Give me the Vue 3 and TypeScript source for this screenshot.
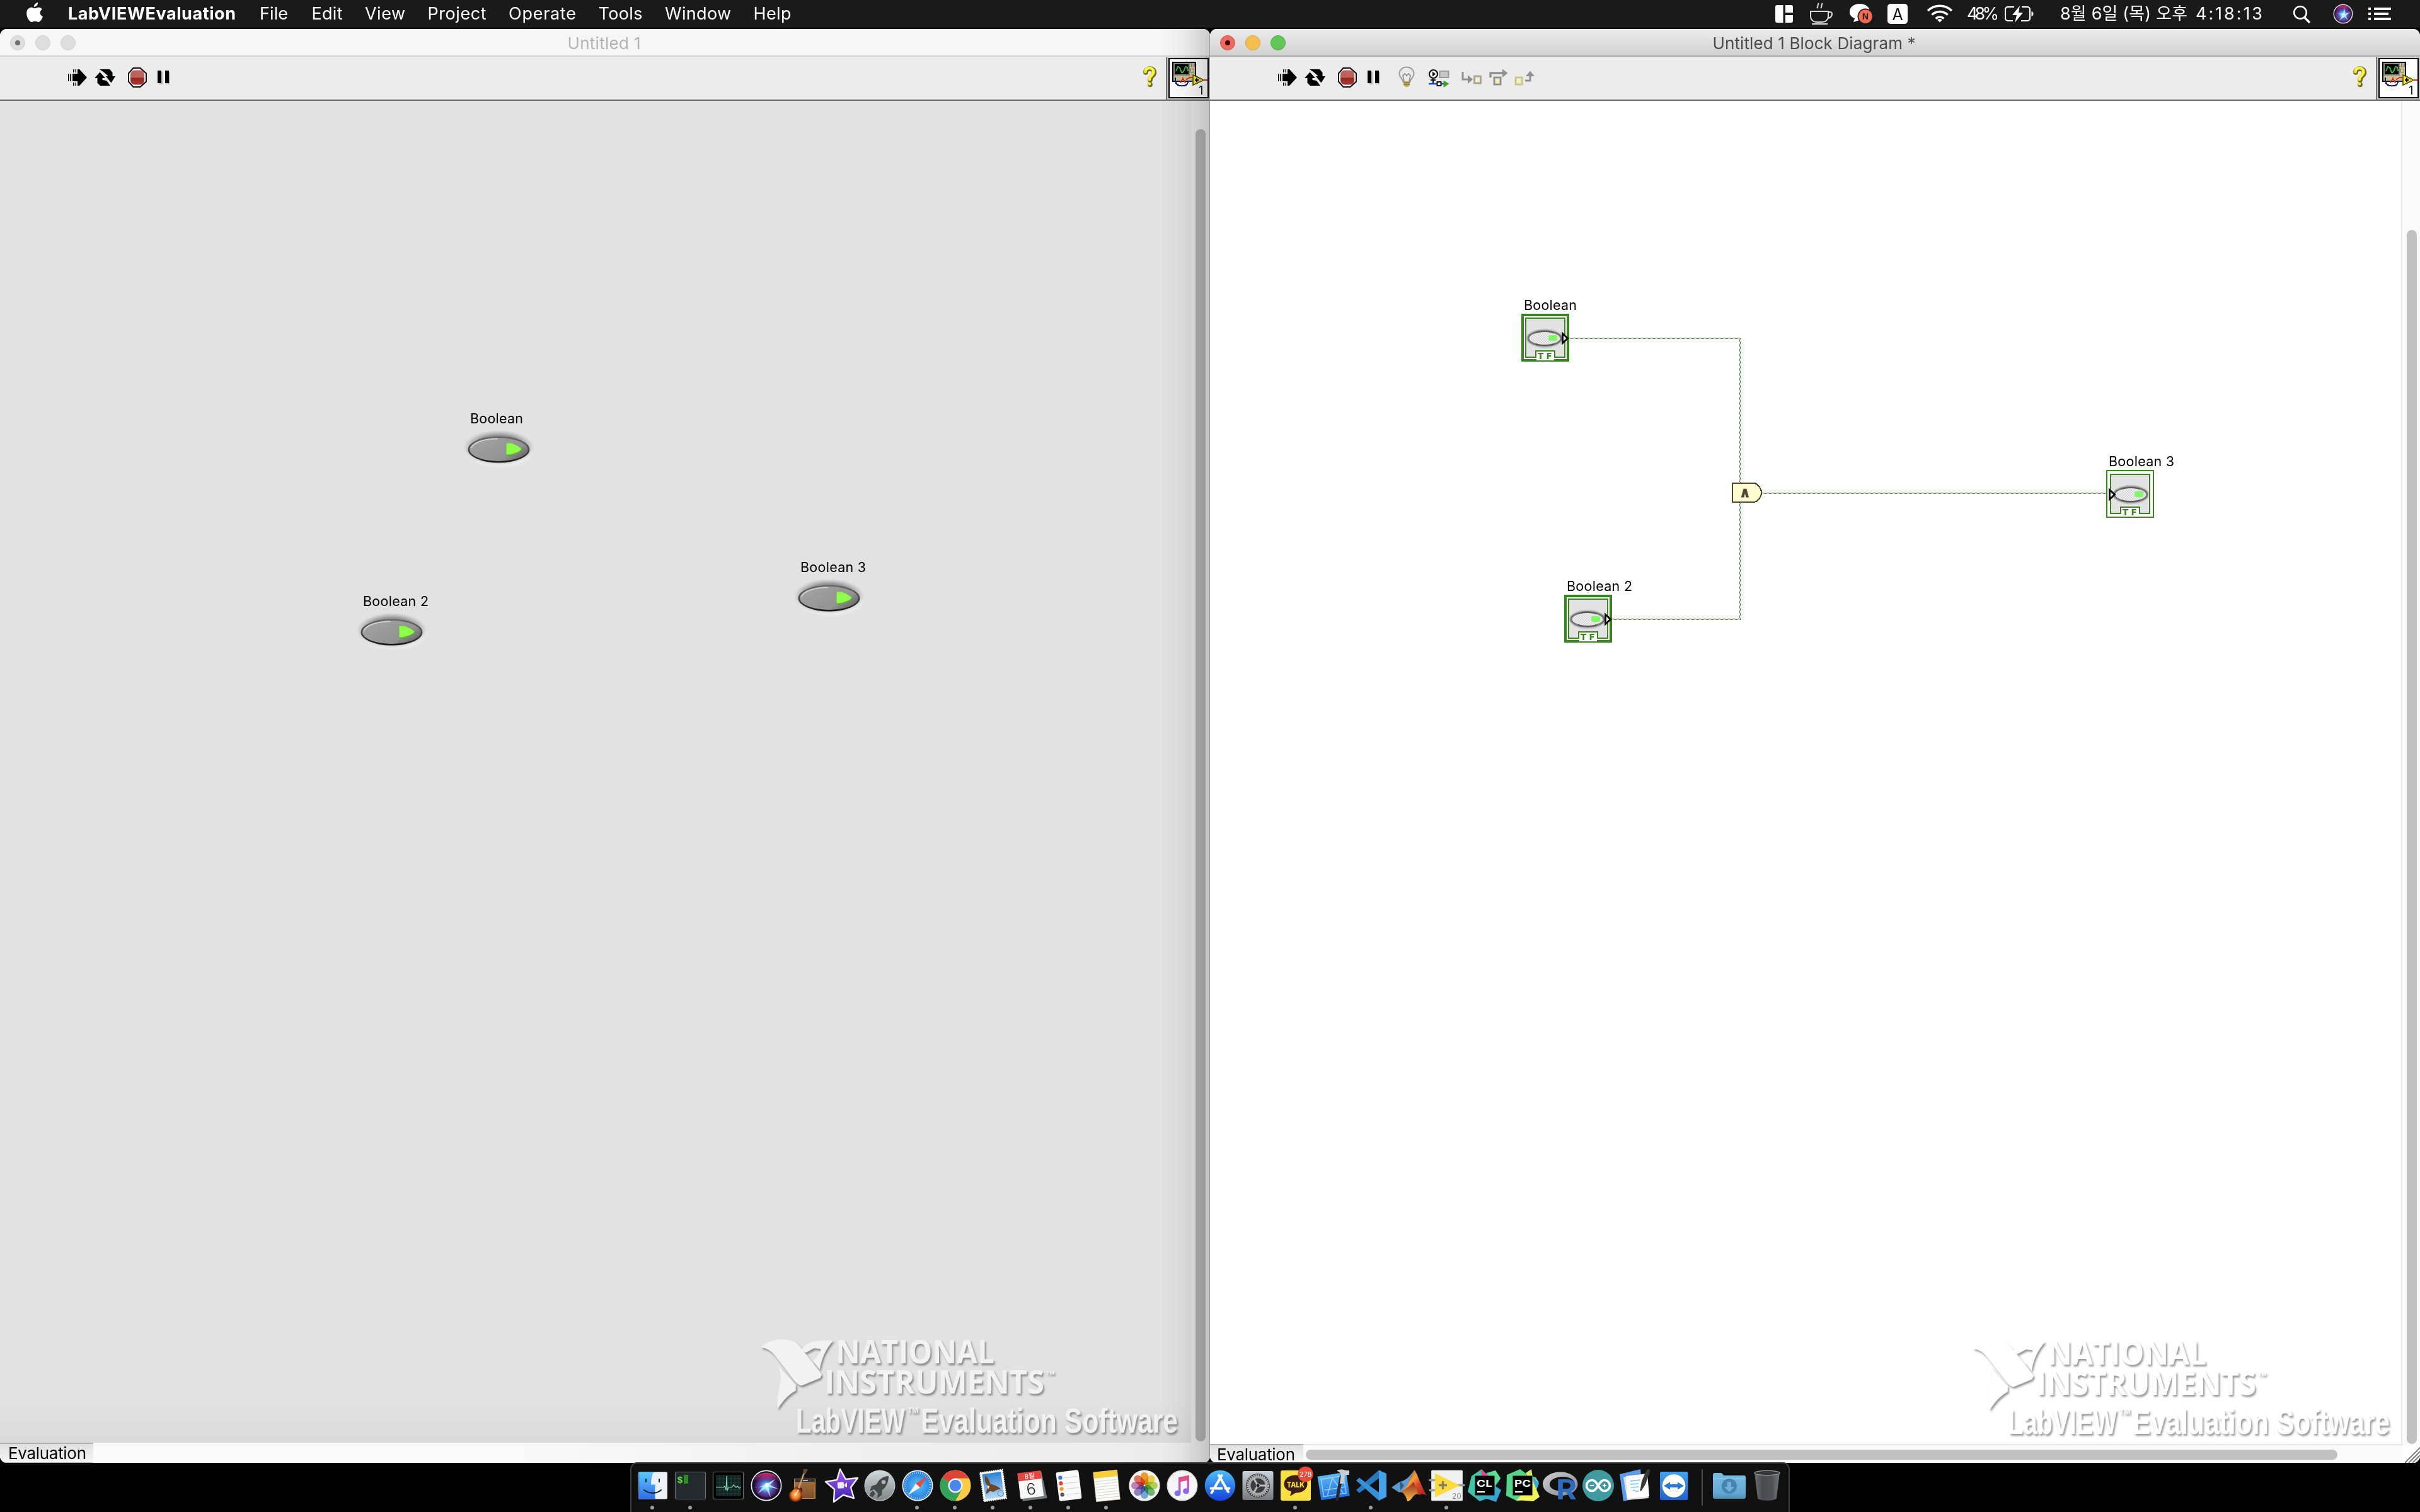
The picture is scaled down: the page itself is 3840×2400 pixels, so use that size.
<script setup lang="ts">
interface Control { label: string; x: number; y: number; w: number }
interface Terminal { label: string; x: number; y: number; w: number; output: boolean }

const menus: { text: string; w: number }[] = [
  { text: 'File', w: 45 },
  { text: 'Edit', w: 49 },
  { text: 'View', w: 64 },
  { text: 'Project', w: 93 },
  { text: 'Operate', w: 107 },
  { text: 'Tools', w: 70 },
  { text: 'Window', w: 105 },
  { text: 'Help', w: 60 },
]

// x / y are the label's left edge and baseline
const controls: Control[] = [
  { label: 'Boolean', x: 746, y: 672, w: 84 },
  { label: 'Boolean 2', x: 576, y: 962, w: 104 },
  { label: 'Boolean 3', x: 1270, y: 908, w: 104 },
]

const terminals: Terminal[] = [
  { label: 'Boolean', x: 2414, y: 498, w: 84, output: true },
  { label: 'Boolean 2', x: 2482, y: 944, w: 104, output: true },
  { label: 'Boolean 3', x: 3342, y: 746, w: 104, output: false },
]

const petals: { a: number; c: string }[] = [
  { a: 0, c: '#f59a23' },
  { a: 45, c: '#f2d93a' },
  { a: 90, c: '#b5d44b' },
  { a: 135, c: '#5fb96a' },
  { a: 180, c: '#6aa9e0' },
  { a: 225, c: '#8d7cc9' },
  { a: 270, c: '#c77bb4' },
  { a: 315, c: '#ec6a55' },
]

const windows = [
  { id: 'panel', title: 'Untitled 1', titleWidth: 116 },
  { id: 'diagram', title: 'Untitled 1 Block Diagram *', titleWidth: 322 },
]

// Tracks a run of text so that it fills the given width
const vFit = {
  mounted(el: HTMLElement, binding: { value: number }) {
    const n = (el.textContent ?? '').length - 1
    const gap = (binding.value - el.getBoundingClientRect().width) / Math.max(n, 1)
    el.style.letterSpacing = gap + 'px'
    el.style.marginRight = -gap + 'px'
  },
}
</script>

<template>
  <div class="screen">
    <svg width="0" height="0" class="defs">
      <defs>
        <pattern id="wire" width="2" height="2" patternUnits="userSpaceOnUse">
          <rect width="1" height="1" fill="#2f7a1c" /><rect x="1" y="1" width="1" height="1" fill="#2f7a1c" />
        </pattern>
        <pattern id="dither" width="4" height="4" patternUnits="userSpaceOnUse">
          <rect width="4" height="4" fill="#eeeeee" /><rect width="2" height="2" fill="#d9d9d9" /><rect x="2" y="2" width="2" height="2" fill="#d9d9d9" />
        </pattern>
        <radialGradient id="halo"><stop offset=".7" stop-color="#777" stop-opacity=".75" /><stop offset="1" stop-color="#999" stop-opacity="0" /></radialGradient>
        <radialGradient id="haloLight"><stop offset=".75" stop-color="#fff" stop-opacity=".4" /><stop offset="1" stop-color="#fff" stop-opacity="0" /></radialGradient>
        <linearGradient id="rim" x2="0" y2="1"><stop offset="0" stop-color="#6a6a6a" /><stop offset=".5" stop-color="#484848" /><stop offset="1" stop-color="#161616" /></linearGradient>
        <linearGradient id="face" x2="1" y2=".6"><stop offset="0" stop-color="#d0d0d0" /><stop offset=".18" stop-color="#a0a0a0" /><stop offset=".8" stop-color="#939393" /><stop offset="1" stop-color="#707070" /></linearGradient>
        <linearGradient id="stop" x2="0" y2="1"><stop offset="0" stop-color="#c4605c" /><stop offset=".48" stop-color="#bb605c" /><stop offset=".55" stop-color="#962823" /><stop offset="1" stop-color="#a63a35" /></linearGradient>
        <radialGradient id="siri" cx=".5" cy=".55"><stop offset="0" stop-color="#fff" /><stop offset=".2" stop-color="#7fd8f0" /><stop offset=".5" stop-color="#4a5fc0" /><stop offset=".8" stop-color="#5a2270" /><stop offset="1" stop-color="#191430" /></radialGradient>
        <linearGradient id="pink" x2="0" y2="1"><stop offset="0" stop-color="#e3326f" /><stop offset="1" stop-color="#a02d8c" stop-opacity="0" /></linearGradient>
        <linearGradient id="finder" x2="0" y2="1"><stop offset="0" stop-color="#5cc8fa" /><stop offset="1" stop-color="#2f6de8" /></linearGradient>
        <linearGradient id="amp" x2="0" y2="1"><stop offset="0" stop-color="#a06a38" /><stop offset="1" stop-color="#7e4f27" /></linearGradient>
        <radialGradient id="guitar"><stop offset="0" stop-color="#ffd052" /><stop offset=".6" stop-color="#ef7a2b" /><stop offset="1" stop-color="#5a180e" /></radialGradient>
        <linearGradient id="imovie" x2="0" y2="1"><stop offset="0" stop-color="#a25cf0" /><stop offset="1" stop-color="#3a1fae" /></linearGradient>
        <linearGradient id="launch" x2="0" y2="1"><stop offset="0" stop-color="#cfdadf" /><stop offset="1" stop-color="#808485" /></linearGradient>
        <radialGradient id="safari"><stop offset="0" stop-color="#58c9f7" /><stop offset="1" stop-color="#2579dd" /></radialGradient>
        <linearGradient id="sky" x2="0" y2="1"><stop offset="0" stop-color="#3080d4" /><stop offset="1" stop-color="#b5daf5" /></linearGradient>
        <linearGradient id="store" x2="0" y2="1"><stop offset="0" stop-color="#4fc0fa" /><stop offset="1" stop-color="#1340d8" /></linearGradient>
        <linearGradient id="note" x2="0" y2="1"><stop offset="0" stop-color="#ef4b6b" /><stop offset=".5" stop-color="#c558c8" /><stop offset="1" stop-color="#5a7cf5" /></linearGradient>
        <linearGradient id="prefs" x2="0" y2="1"><stop offset="0" stop-color="#c9d2d8" /><stop offset="1" stop-color="#77797b" /></linearGradient>
        <linearGradient id="xcode" x2="0" y2="1"><stop offset="0" stop-color="#5db6f4" /><stop offset="1" stop-color="#1b70e0" /></linearGradient>
        <linearGradient id="matlab" x2="1" y2="1"><stop offset="0" stop-color="#7a1f1a" /><stop offset=".4" stop-color="#f5a03c" /><stop offset=".6" stop-color="#d8482a" /><stop offset="1" stop-color="#a02018" /></linearGradient>
        <linearGradient id="matlabFoot" x2="0" y2="1"><stop offset="0" stop-color="#8c2a1c" /><stop offset="1" stop-color="#fbc043" /></linearGradient>
        <linearGradient id="clion" x2="1" y2="1"><stop offset="0" stop-color="#43d0a0" /><stop offset=".5" stop-color="#3fbfae" /><stop offset="1" stop-color="#3795e5" /></linearGradient>
        <linearGradient id="silver" x2="1" y2="1"><stop offset="0" stop-color="#cfd0d4" /><stop offset="1" stop-color="#83858b" /></linearGradient>
        <linearGradient id="tv" x2="0" y2="1"><stop offset="0" stop-color="#45a3ea" /><stop offset="1" stop-color="#2361cc" /></linearGradient>
        <linearGradient id="folder" x2="0" y2="1"><stop offset="0" stop-color="#78bde3" /><stop offset=".78" stop-color="#62a8d2" /><stop offset="1" stop-color="#4d8cb4" /></linearGradient>
        <linearGradient id="trash" x2="1"><stop offset="0" stop-color="#6e7073" /><stop offset=".3" stop-color="#4a4c4f" /><stop offset=".7" stop-color="#505255" /><stop offset="1" stop-color="#77797c" /></linearGradient>
      </defs>
    </svg>

    <header class="menubar">
      <svg class="apple" width="26" height="44" viewBox="0 0 26 44">
        <path fill="#fff" d="M18 4c.4 3-2.300 7-6 7-.4-3.200 2.400-6.400 6-7zM13.500 13.200c1.600 0 3-1.500 5.800-1.500 2.200 0 4.400 1.200 5.600 3-4.800 2.800-4 9.600 1 11.500-1.200 3.800-4 8.800-7 8.800-2 0-2.800-1.200-5.200-1.200S10.300 35 8.400 35C4.600 35 .2 27.600.2 21.200c0-6 3.700-9.400 7.500-9.400 2.600 0 4.200 1.400 5.800 1.400z" />
      </svg>
      <b class="app-name"><span v-fit="266">LabVIEWEvaluation</span></b>
      <nav class="menus">
        <span v-for="m in menus" :key="m.text" class="menu" :style="{ width: m.w + 'px' }"><span v-fit="m.w">{{ m.text }}</span></span>
      </nav>
      <div class="status">
        <svg width="28" height="44" viewBox="0 0 28 44"><path fill="#fff" d="M3 8h9.500v28H3a3 3 0 0 1-3-3V11a3 3 0 0 1 3-3zM16 8h9a3 3 0 0 1 3 3v9H16zM16 24h12v9a3 3 0 0 1-3 3h-9z" /></svg>
        <svg style="margin-left: 26px" width="38" height="44" viewBox="0 0 38 44" fill="none" stroke="#ddd" stroke-width="2"><path d="M2 18h28v8c0 5-4 9-9 9h-10c-5 0-9-4-9-9zM30 19h3c5 0 4 9-4 10M4 38h25M15 5c-3 3 0 5-3 8M21 5c-3 3 0 5-3 8" /></svg>
        <svg style="margin-left: 25px" width="38" height="44" viewBox="0 0 38 44"><path fill="#fff" d="M17 6c9 0 16 5 16 13 0 8-7 13-16 13l-10 3 2-6C3 27 1 23 1 19 1 11 8 6 17 6z" /><circle cx="26" cy="26" r="12.500" fill="#1a1a1a" /><circle cx="26" cy="26" r="10.800" fill="#f96a50" /><text x="26" y="31" text-anchor="middle" font-size="13" font-weight="700" fill="#222">N</text></svg>
        <svg style="margin-left: 23px" width="32" height="44" viewBox="0 0 32 44"><rect y="6" width="32" height="32" rx="5" fill="#fff" /><text x="16" y="31.500" text-anchor="middle" font-size="25" fill="#111">A</text></svg>
        <svg style="margin-left: 30px" width="42" height="44" viewBox="0 0 42 44" fill="none" stroke="#fff" stroke-width="3.600"><path d="M2 17a27 27 0 0 1 38 0M8.500 23.500a18 18 0 0 1 25 0M14.500 29.500a9.500 9.500 0 0 1 13 0" /><path d="M21 35.500l-4-4a6 6 0 0 1 8 0z" fill="#fff" stroke="none" /></svg>
        <span class="slot" style="margin-left: 22px; width: 51px"><span v-fit="51">48%</span></span>
        <svg style="margin-left: 9px" width="46" height="44" viewBox="0 0 46 44"><path fill="none" stroke="#fff" stroke-width="2.200" d="M15 11H5a4 4 0 0 0-4 4v14a4 4 0 0 0 4 4h8M27 11h9a4 4 0 0 1 4 4v14a4 4 0 0 1-4 4H26" /><path fill="#fff" d="M42.500 18c4 1 4 7 0 8zM24 9L12 24h7l-3 12 13-16h-7z" /></svg>
        <span class="slot" style="margin-left: 42px; width: 202px"><span v-fit="202">8월 6일 (목) 오후</span></span>
        <span class="slot" style="margin-left: 13px; width: 106px"><span v-fit="106">4:18:13</span></span>
        <svg style="margin-left: 48px" width="30" height="44" viewBox="0 0 30 44" fill="none" stroke="#fff" stroke-width="2.600"><circle cx="12" cy="20" r="9.800" /><path d="M18.500 27.500l8.500 8.500" stroke-width="3.400" /></svg>
        <svg style="margin-left: 34px" width="32" height="44" viewBox="0 0 32 44"><circle cx="16" cy="22" r="15.500" fill="#ddd" /><circle cx="16" cy="22" r="14" fill="url(#siri)" /><path d="M3 17a14 14 0 0 1 26 0c-8-5-18-4-26 0z" fill="url(#pink)" /><path d="M5 20l11 3 2-12 1 11 9-3-8 6 4 8-6-7-8 7 5-9z" fill="#d5f8ff" opacity=".8" /></svg>
        <svg style="margin-left: 24px" width="36" height="44" viewBox="0 0 36 44" fill="#fff"><path d="M0 12h4v4H0zM0 20h4v4H0zM0 28h4v4H0zM9 12h27v4H9zM9 20h23v4H9zM9 28h27v4H9z" /></svg>
      </div>
    </header>

    <main class="windows">
      <section v-for="win in windows" :key="win.id" class="window" :class="win.id">
        <div class="titlebar">
          <div class="lights"><i class="close"></i><i class="mini"></i><i class="zoom"></i></div>
          <span class="title"><span v-fit="win.titleWidth">{{ win.title }}</span></span>
        </div>

        <div class="toolbar">
          <svg width="31" height="68" viewBox="0 90 31 68"><path d="M0 117h1.500v12H0zM3 117h1.500v12H3zM8 110h1.500v5H8zM11.500 110H13v5h-1.500zM8 131h1.500v5H8zM11.500 131H13v5h-1.500zM7 117h8v-7h3l12 13-12 13h-3v-7H7z" /></svg>
          <svg style="margin-left: 11px" width="33" height="68" viewBox="0 90 33 68"><path d="M8 110h16l4.500 5v6H33l-6.500 10.500L18 121h4l-7.500-6.500zM8.500 114.500L17 124h-4.500v3l6.500 1 6 8H9l-4.500-4.500V124H0z" /></svg>
          <svg style="margin-left: 19px" width="32" height="68" viewBox="0 90 32 68"><path d="M9 107h12l10 9v14l-10 9H9l-8-9v-14z" fill="#111" /><path d="M10 109h10l9 8v12l-9 8H10l-7-8v-12z" fill="#fff" /><rect x="5" y="111.500" width="22" height="23" rx="7" fill="url(#stop)" /></svg>
          <svg style="margin-left: 16px" width="22" height="68" viewBox="0 90 22 68"><path d="M2 114h6v20H2zM14 114h6v20h-6z" fill="#bbb" /><path d="M0 112h6v20H0zM12 112h6v20h-6z" /></svg>
          <template v-if="win.id === 'diagram'">
            <svg style="margin-left: 27px" width="26" height="68" viewBox="0 90 26 68"><path d="M13 106.500c7 0 11.500 5 11.500 10.500 0 6-5 7-6 13h-11c-1-6-6-7-6-13 0-5.500 4.500-10.500 11.500-10.500z" fill="#eaeaea" stroke="#9d9d9d" stroke-width="2" /><path d="M9 130l-2-10 3-3 3 3 3-3 3 3-2 10" fill="none" stroke="#8e8e8e" stroke-width="1.700" /><path d="M8 129h10v6l-3 3h-4l-3-3z" fill="#c3a648" /><path d="M8 131h10M8 134h10" stroke="#665" stroke-width="1" /></svg>
            <svg style="margin-left: 22px" width="34" height="68" viewBox="0 90 34 68"><circle cx="7.500" cy="117.500" r="6.500" fill="#fff" stroke="#111" stroke-width="2.200" /><path d="M6 113.500l5 4-5 4z" /><rect x="17.500" y="113" width="14" height="10" fill="#c7c7c7" stroke="#999" stroke-width="2" /><path d="M7 124v8M3 127h8" stroke="#111" stroke-width="2" /><path d="M0 133h14M19 133h6" stroke="#1546ff" stroke-width="2.400" /><rect x="13.500" y="130" width="6" height="6" fill="#fff" stroke="#111" stroke-width="2" /><path d="M23.500 127.500l9 5.500-9 6z" fill="#39a621" /></svg>
            <svg style="margin-left: 18px" width="34" height="68" viewBox="0 90 34 68"><path d="M2 114v12H12" fill="none" stroke="#8f8f8f" stroke-width="3" /><path d="M10 119l8 7-8 7z" fill="#8f8f8f" /><rect x="20.500" y="121" width="10" height="11" fill="#f5f1bd" stroke="#a2a2a2" stroke-width="2.800" /></svg>
            <svg style="margin-left: 10px" width="31" height="68" viewBox="0 90 31 68"><path d="M2 123v-7H21" fill="none" stroke="#8f8f8f" stroke-width="3.400" /><path d="M21 109.500l8.500 6.500-8.500 7z" fill="#8f8f8f" /><rect x="8" y="123" width="10" height="11" fill="#f5f1bd" stroke="#8f8f8f" stroke-width="2.800" /></svg>
            <svg style="margin-left: 9px" width="32" height="68" viewBox="0 90 32 68"><rect x="2" y="123" width="10" height="11" fill="#f5f1bd" stroke="#c6c38c" stroke-width="2.800" /><path d="M17 128h8v-8" fill="none" stroke="#8f8f8f" stroke-width="3" /><path d="M18 121l7-8.500 7 8.500z" fill="#8f8f8f" /></svg>
          </template>
          <svg class="help" width="24" height="68" viewBox="0 90 24 68"><g fill="none" stroke-linecap="round" stroke-linejoin="round"><path d="M5 115c0-4.500 3-6 7-6s6.500 2.500 6.500 6c0 5-6.500 6-6.500 12M12 134v.5" stroke="#6d6a20" stroke-width="7.600" /><path d="M4.500 114c0-4.500 3-6 6.500-6s6.500 2.500 6.500 6c0 5-6.500 6-6.500 12M11 133v.3" stroke="#fbf33c" stroke-width="4.600" /></g></svg>
          <div class="vi-well">
            <svg width="64" height="64" viewBox="0 0 64 64" shape-rendering="crispEdges">
              <rect x="1" y="1" width="62" height="62" fill="#fff" stroke="#000" stroke-width="2" />
              <rect x="7" y="7" width="36" height="30" fill="#c9c394" stroke="#000" stroke-width="2" />
              <rect x="8" y="8" width="26" height="20" fill="#8d8d8d" /><rect x="10" y="10" width="22" height="16" />
              <path d="M12 21l3-7 3 1 3 8 3-1 3-8 3 1 1 6" fill="none" stroke="#2fae2f" stroke-width="2" />
              <path d="M37 8v6M41 8v6" stroke="#777" stroke-width="2" /><circle cx="38" cy="20" r="3" fill="#e9bd8a" stroke="#666" />
              <path d="M11 31v6c3 10 18 10 21 0h9" fill="none" stroke="#0a1a80" stroke-width="2" />
              <path d="M19 40l4-8 4 8M28 34l6-3h6M56 35h6" fill="none" stroke="#f22" stroke-width="2" />
              <path d="M39 27l17 8-17 8z" fill="#fbe93a" stroke="#716a14" stroke-width="2" /><path d="M42 35h6M45 32v6" stroke="#000" stroke-width="2" />
              <text x="48" y="58" font-size="18" fill="#000">1</text>
            </svg>
          </div>
        </div>

        <template v-if="win.id === 'panel'">
          <div class="body">
            <svg class="canvas" width="1890" height="2130" viewBox="0 160 1890 2130">
              <g v-for="c in controls" :key="c.label">
                <text :x="c.x" :y="c.y" :textLength="c.w" font-size="21.500">{{ c.label }}</text>
                <g :transform="`translate(${c.x + 45.5} ${c.y + 41.500})`">
                  <ellipse cx="3" cy="5" rx="54" ry="25" fill="url(#haloLight)" />
                  <ellipse cy="-3" rx="56" ry="28" fill="url(#halo)" />
                  <ellipse rx="49" ry="21" fill="url(#rim)" />
                  <ellipse rx="46.500" ry="18.500" fill="url(#face)" />
                  <path d="M-44-2c4-10 22-15 42-15" fill="none" stroke="#e6e6e6" stroke-width="2" opacity=".65" />
                  <path d="M12-10h8c8 3 14 6 17 10-3 5-12 8-20 10h-5z" fill="#5faa38" />
                  <path d="M12-10h8c8 3 13 6 16 9-3 5-11 7-19 9h-5z" fill="#8dff48" />
                </g>
              </g>
            </svg>
            <div class="vtrack"><i class="vthumb"></i></div>
            <svg class="mark" width="710" height="190" viewBox="0 0 710 190">
              <g fill="#f2f2f2">
                <g transform="translate(-2 0) scale(.4847 .3333)"><path d="M195 130C205 90 240 80 298 82C270 130 260 170 253 222L232 180C250 150 260 130 256 124L235 120L207 142z" /><path d="M120 205L175 295V322C145 345 130 380 116 408C108 370 125 300 125 260z" /><path d="M60 115C85 85 110 76 135 78C165 80 180 95 190 115L260 245L255 262L195 298C185 298 175 285 165 265L120 180C100 140 90 125 60 115z" /></g>
                <g class="brand"><text x="146" y="64" textLength="252" lengthAdjust="spacingAndGlyphs" font-size="52">NATIONAL</text><text x="128" y="112" textLength="349" lengthAdjust="spacingAndGlyphs" font-size="52">INSTRUMENTS</text></g>
                <g class="product"><text x="83" y="174" textLength="173" lengthAdjust="spacingAndGlyphs" font-size="55">LabVIEW</text><text x="281" y="174" textLength="408" lengthAdjust="spacingAndGlyphs" font-size="55">Evaluation Software</text><text x="480" y="82" font-size="9">TM</text><text x="260" y="143" font-size="12">TM</text></g>
              </g>
            </svg>
          </div>
          <footer class="strip"><span class="evaluation"><span v-fit="124">Evaluation</span></span></footer>
          <div class="cast"></div>
        </template>

        <template v-else>
          <div class="body">
            <svg class="canvas" width="1890" height="2132" viewBox="1920 160 1890 2132">
              <g shape-rendering="crispEdges" fill="url(#wire)">
                <rect x="2490" y="536" width="272" height="2" /><rect x="2760" y="538" width="2" height="228" /><rect x="2558" y="982" width="204" height="2" /><rect x="2760" y="798" width="2" height="184" /><rect x="2796" y="782" width="546" height="2" />
              </g>
              <g shape-rendering="crispEdges"><path d="M2749 767h35c4 1 7 4 9 8 3 5 3 9 0 14-2 4-5 7-9 8h-35z" fill="#fffdd0" stroke="#4c4835" stroke-width="2" /></g>
              <text class="and" x="2769" y="789" text-anchor="middle">∧</text>
              <g v-for="t in terminals" :key="t.label">
                <text :x="t.x + 4" :y="t.y - 6" :textLength="t.w" font-size="21.500">{{ t.label }}</text>
                <g :transform="`translate(${t.x} ${t.y})`">
                  <g shape-rendering="crispEdges" fill="none" stroke="#3a8222">
                    <rect v-if="t.output" x="2" y="2" width="72" height="72" fill="#fff" stroke-width="4" />
                    <rect v-else x="1" y="1" width="74" height="74" fill="#fff" stroke-width="2" />
                    <rect x="7" y="7" width="62" height="62" fill="#e2e2e2" stroke-width="2" />
                    <path d="M24 74V59h28v15" fill="#fff" stroke="none" /><path d="M23 70V59h30v11" stroke-width="2" />
                  </g>
                  <g :transform="`translate(${t.output ? 37 : 39} 39)`">
                    <ellipse rx="29" ry="15" fill="#aaa" opacity=".55" stroke="#999" stroke-dasharray="2 2" />
                    <ellipse rx="26" ry="11.500" fill="url(#dither)" stroke="#777" stroke-width="3" />
                    <path d="M-15-8.500C-8-12 8-12 15-8.500M-15 8.500C-8 12 8 12 15 8.500" fill="none" stroke="#555" stroke-width="1.500" />
                    <rect x="6" y="-5" width="14" height="9" rx="3" fill="#82f767" />
                  </g>
                  <path :transform="t.output ? 'translate(64 30)' : 'translate(4 30)'" d="M1.500 1.500v15l8-7.500z" fill="#fff" stroke="#000" stroke-width="2.800" />
                  <text class="tf" x="26 39.500" y="72">TF</text>
                </g>
              </g>
            </svg>
            <div class="vtrack"><i class="vthumb"></i></div>
            <svg class="mark" width="710" height="190" viewBox="0 0 710 190">
              <g fill="#fff">
                <g transform="translate(-2 0) scale(.4847 .3333)"><path d="M195 130C205 90 240 80 298 82C270 130 260 170 253 222L232 180C250 150 260 130 256 124L235 120L207 142z" /><path d="M120 205L175 295V322C145 345 130 380 116 408C108 370 125 300 125 260z" /><path d="M60 115C85 85 110 76 135 78C165 80 180 95 190 115L260 245L255 262L195 298C185 298 175 285 165 265L120 180C100 140 90 125 60 115z" /></g>
                <g class="brand"><text x="146" y="64" textLength="252" lengthAdjust="spacingAndGlyphs" font-size="52">NATIONAL</text><text x="128" y="112" textLength="349" lengthAdjust="spacingAndGlyphs" font-size="52">INSTRUMENTS</text></g>
                <g class="product"><text x="83" y="174" textLength="173" lengthAdjust="spacingAndGlyphs" font-size="55">LabVIEW</text><text x="281" y="174" textLength="408" lengthAdjust="spacingAndGlyphs" font-size="55">Evaluation Software</text><text x="480" y="82" font-size="9">TM</text><text x="260" y="143" font-size="12">TM</text></g>
              </g>
            </svg>
          </div>
          <footer class="strip">
            <span class="evaluation"><span v-fit="124">Evaluation</span></span>
            <div class="htrack"><i class="hthumb"></i></div>
            <svg class="grip" width="28" height="28" viewBox="0 0 28 28"><path d="M4 28L28 4M10 28L28 10M16 28L28 16M22 28l6-6" stroke="#777" stroke-width="1.800" /></svg>
          </footer>
        </template>
      </section>
    </main>

    <div class="dock">
      <!-- Finder -->
      <svg class="ic" viewBox="0 0 60 72"><rect x="7" y="8.500" width="46" height="43" rx="2" fill="#eef2f8" /><path d="M9 8.500h22c-3 7-4 13-4 20h7c-1 7-1 15 0 23H9a2 2 0 0 1-2-2v-39a2 2 0 0 1 2-2z" fill="url(#finder)" /><path d="M19 20v4M40 20v4" stroke="#123" stroke-width="2" stroke-linecap="round" /><path d="M16 37c8 6.500 20 6.500 27 0" fill="none" stroke="#123" stroke-width="2" stroke-linecap="round" /><circle class="dot" cx="29" cy="65" r="3" /></svg>
      <!-- Terminal -->
      <svg class="ic" viewBox="0 0 60 72"><rect x="5.500" y="8.500" width="48" height="43" rx="2" fill="#232a2e" stroke="#6b7175" stroke-width="1.200" /><text x="8.500" y="25.500" class="mono" font-size="15" fill="#5be04a">$</text><rect x="19" y="13" width="7" height="14" fill="#2f8c25" /><circle class="dot" cx="29" cy="65" r="3" /></svg>
      <!-- Activity Monitor -->
      <svg class="ic" viewBox="0 0 60 72"><rect x="5.500" y="8.500" width="48" height="43" rx="2" fill="#000" stroke="#6b7175" stroke-width="1.200" /><rect x="10" y="13" width="40" height="34" fill="#12231f" /><path d="M16 13v34M22 13v34M28 13v34M34 13v34M40 13v34M46 13v34M10 19h40M10 25h40M10 31h40M10 37h40M10 43h40" stroke="#285046" stroke-width=".7" /><path d="M10 33h12l2-2 2 6 1-22 1 23 2-5h5l3-4 4 4 2-2 3 3 3-1" fill="none" stroke="#84d3b9" stroke-width="1.200" /></svg>
      <!-- Siri -->
      <svg class="ic" viewBox="0 0 60 72"><circle cx="30" cy="30" r="24.500" fill="#e8e8ee" /><circle cx="30" cy="30" r="22.800" fill="#16142c" /><circle cx="30" cy="30" r="19.500" fill="url(#siri)" /><path d="M9 24c5-19 37-19 42 0-12-4-28-6-42 0z" fill="url(#pink)" /><path d="M10 33c8 0 14-2 20-6l14-7-8 9 14 7-17-4 4 17-8-15-13 9 9-11z" fill="#bdf6f4" opacity=".8" /><circle cx="31" cy="29" r="3" fill="#fff" /></svg>
      <!-- GarageBand -->
      <svg class="ic" viewBox="0 0 60 72"><rect x="14" y="19" width="34" height="32" fill="#bb874c" /><rect x="15.500" y="26" width="31" height="24" fill="url(#amp)" /><rect x="15" y="20" width="32" height="5" fill="#333" /><path d="M28 22h8" stroke="#ddd" stroke-width="1.500" /><path d="M31 7L20 38" stroke="#c49a6c" stroke-width="2.600" /><path d="M28.500 4l5-.500 2 1-3 7h-3.500z" fill="#5c4936" /><path d="M16 33c4-2 5 3 8 1s4 3 2 7 3 8-1 12-14 4-17 0-3-10 1-13 4-5 7-7z" fill="url(#guitar)" /><path d="M15 46l6-9" stroke="#eee" stroke-width="1.500" /></svg>
      <!-- iMovie -->
      <svg class="ic" viewBox="0 0 60 72"><path d="M27 4l9 16 19-2-11 15 5 17-17-5-15 11 1-20L4 24l18-3z" fill="url(#imovie)" stroke="#f1eef8" stroke-width="2.400" stroke-linejoin="round" /><rect x="23" y="24.500" width="10" height="10" rx="1.500" fill="#ece8fb" transform="rotate(-4 28 30)" /><path d="M34 28l4-3v8l-4-2z" fill="#ece8fb" /></svg>
      <!-- Launchpad -->
      <svg class="ic" viewBox="0 0 60 72"><circle cx="30" cy="30" r="24.500" fill="#c5cbce" /><circle cx="30" cy="30" r="23.500" fill="url(#launch)" /><path d="M44 15c-9 0-16 6-19 13l-8 3-3 8 7-3 6 6-1 8 7-5 1-8c6-4 10-12 10-22z" fill="#46494c" /><circle cx="36" cy="24.500" r="3.200" fill="#aeb4b7" /><path d="M19 38l4 5-4 5-5-1 1-5z" fill="#46494c" /></svg>
      <!-- Safari -->
      <svg class="ic" viewBox="0 0 60 72"><circle cx="30" cy="30" r="24.500" fill="#eef0f2" /><circle cx="30" cy="30" r="22.800" fill="url(#safari)" /><circle cx="30" cy="30" r="20.300" fill="none" stroke="#cfe9ff" stroke-width="3" stroke-dasharray=".8 2.400" /><path d="M45 15L34 33l-7-6z" fill="#f0463c" /><path d="M15 45l12-18 7 6z" fill="#f4f4f4" /><circle class="dot" cx="29" cy="65" r="3" /></svg>
      <!-- Chrome -->
      <svg class="ic" viewBox="0 0 60 72"><circle cx="30" cy="30" r="24.500" fill="#fbcb45" /><path d="M30 30L8.800 17.700A24.500 24.500 0 0 1 51.500 18.500H30z" fill="#db4437" /><path d="M30 30L8.800 17.700A24.500 24.500 0 0 0 30 54.500L40.500 35.500z" fill="#34a25a" /><circle cx="30" cy="30" r="11.500" fill="#f6f6f6" /><circle cx="30" cy="30" r="9.200" fill="#4a86ee" /><circle class="dot" cx="29" cy="65" r="3" /></svg>
      <!-- Mail -->
      <svg class="ic" viewBox="0 0 60 72"><g transform="rotate(-8 30 30)"><rect x="12" y="7" width="36" height="46" fill="#fff" stroke="#fff" stroke-width="2" stroke-dasharray="2 1.500" /><rect x="15" y="10" width="30" height="40" fill="url(#sky)" /><path d="M20 13c4 3 5 9 6 14 6 2 12 6 15 10-5 0-9 1-12 3l-5-2-7 4c1-6 3-9 5-11-4-6-5-12-2-18z" fill="#6b4726" /><path d="M21 28l3 3-3 4z" fill="#f6efe0" /><circle cx="40" cy="44" r="4.500" fill="none" stroke="#557da5" /></g><circle class="dot" cx="29" cy="65" r="3" /></svg>
      <!-- Calendar -->
      <svg class="ic" viewBox="0 0 60 72"><g transform="rotate(-7 30 30)"><path d="M11 14l4-3h34l4 42H14z" fill="#71787b" /><rect x="11" y="9" width="37" height="40" fill="#f8f8f8" /><rect x="11" y="8" width="37" height="13" fill="#e2473f" /><text x="29.500" y="18.500" text-anchor="middle" font-size="10.500" fill="#fff">8월</text><text x="29.500" y="44.500" text-anchor="middle" font-size="25" font-weight="300" fill="#222">6</text></g><circle class="dot" cx="29" cy="65" r="3" /></svg>
      <!-- Reminders -->
      <svg class="ic" viewBox="0 0 60 72"><g transform="rotate(-7 30 30)"><rect x="12" y="7" width="36" height="46" rx="3" fill="#fafafa" /><circle cx="18" cy="16" r="3.200" fill="#3478f6" /><circle cx="18" cy="25" r="3.200" fill="#e5493a" /><circle cx="18" cy="34" r="3.200" fill="#ef9a35" /><circle cx="18" cy="43" r="3.200" fill="#55585c" /><path d="M24 17h21M24 26h21M24 35h21M24 44h21" stroke="#ccc" /></g><circle class="dot" cx="29" cy="65" r="3" /></svg>
      <!-- Notes -->
      <svg class="ic" viewBox="0 0 60 72"><g transform="rotate(-6 30 30)"><rect x="11" y="7" width="38" height="47" fill="#fcfcf8" stroke="#c8bc8b" stroke-width=".6" /><rect x="11" y="7" width="38" height="10" fill="#f7cf3d" /><path d="M11 22h38M11 26.500h38M11 31h38M11 35.500h38M11 40h38M11 44.500h38M11 49h38" stroke="#d5d5d0" /></g><circle class="dot" cx="29" cy="65" r="3" /></svg>
      <!-- Photos -->
      <svg class="ic" viewBox="0 0 60 72"><circle cx="30" cy="30" r="24.500" fill="#f2f2f0" /><rect v-for="p in petals" :key="p.a" class="petal" x="24" y="9" width="12" height="20" rx="6" :fill="p.c" :transform="`rotate(${p.a} 30 30)`" /></svg>
      <!-- iTunes -->
      <svg class="ic" viewBox="0 0 60 72"><circle cx="30" cy="30" r="24.500" fill="#d8d8da" /><circle cx="30" cy="30" r="23" fill="#f5f5f8" /><path d="M24 17l17-3.500v25a5 4.500 0 1 1-3.500-4V22L27.500 24v18a5 4.500 0 1 1-3.500-4z" fill="url(#note)" /></svg>
      <!-- App Store -->
      <svg class="ic" viewBox="0 0 60 72"><circle cx="30" cy="30" r="24.300" fill="url(#store)" /><path d="M32.500 14L21 34M28 14l15 26M15.500 34.500h17M38.500 34.500h6M18.500 38.500l-2 3" stroke="#fff" stroke-width="4" stroke-linecap="round" /></svg>
      <!-- System Preferences -->
      <svg class="ic" viewBox="0 0 60 72"><rect x="5.500" y="7" width="49" height="46" rx="3" fill="url(#prefs)" /><circle cx="30" cy="30" r="19" fill="#3b3c3e" /><circle cx="30" cy="30" r="16.500" fill="none" stroke="#babcbe" stroke-width="3" stroke-dasharray="2 1.500" /><circle cx="30" cy="30" r="13.500" fill="none" stroke="#a5a7a9" stroke-width="4" /><path d="M30 30h14M30 30l-7-12M30 30l-7 12" stroke="#b9bbbd" stroke-width="3" /><circle cx="30" cy="30" r="3" fill="#222" stroke="#aaa" /></svg>
      <!-- KakaoTalk -->
      <svg class="ic" viewBox="0 0 60 72"><rect x="6" y="6" width="48" height="48" rx="3" fill="#fae040" /><path d="M30 13.500c11 0 18.500 6 18.500 14S41 41.500 31 41.500c-3 0-6 4-10 5l2-7c-7-2-11.500-6-11.500-12 0-8 7.500-14 18.500-14z" fill="#3b1d1c" /><text x="30" y="33" text-anchor="middle" font-size="12" font-weight="800" fill="#fae040" textLength="28" lengthAdjust="spacingAndGlyphs">TALK</text><circle cx="45.500" cy="12" r="12.200" fill="#ed4a37" /><text x="45.500" y="16" text-anchor="middle" font-size="11" fill="#fff">278</text><circle class="dot" cx="29" cy="65" r="3" /></svg>
      <!-- Xcode -->
      <svg class="ic" viewBox="0 0 60 72"><g transform="rotate(-9 30 30)"><rect x="7" y="12" width="46" height="38" fill="url(#xcode)" /><path d="M18 44l12-26 13 26M15 35h32M12 17h36v28H12z" fill="none" stroke="#b5dcff" stroke-width="1.500" opacity=".8" /></g><path d="M40 14l5 1-7 38c-1 2-5 1-5-1z" fill="#292a2c" /><path d="M35 6c5-2 10-2 14 0h6v7h-5l-2 1-2 13h-6l2-16z" fill="#c7ccd0" /></svg>
      <!-- VS Code -->
      <svg class="ic" viewBox="0 0 60 72"><path d="M42 5.500L54 11v37l-12 6z" fill="#45a0e6" /><path d="M42 5.500v13L11 42l-5-5z" fill="#2878bf" /><path d="M42 54V41L11 17.500 6 22z" fill="#3590d8" /><circle class="dot" cx="29" cy="65" r="3" /></svg>
      <!-- MATLAB -->
      <svg class="ic" viewBox="0 0 60 72"><path d="M2 33l13-9c9-1 16-9 22-17L22 41c-5 1-6-2-8 0z" fill="#5b9bd0" /><path d="M15 24c3 1 4 2 7 6l-6 8z" fill="#305e94" /><path d="M19 37c8-2 13-20 19-32 5 5 10 24 20 41-6-3-8-3-11-1z" fill="url(#matlab)" /><path d="M17 39c7-3 15-8 20-15l7 19c-8 0-10 12-17 12-1-6-5-13-10-16z" fill="url(#matlabFoot)" /></svg>
      <!-- LabVIEW -->
      <svg class="ic" viewBox="0 0 60 72"><rect x="5.500" y="6" width="49" height="48" rx="1" fill="#f0f0f0" stroke="#cfcfcf" /><path d="M3 21.500h9M3 37.500h9M45 29.500h12" stroke="#9a9da0" stroke-width="3.400" stroke-linecap="round" /><path d="M12 11l37 18c1 .500 1 1 0 1.500L12 48c-1 0-1-.500-1-1V12c0-1 0-1 1-1z" fill="#fbda3c" /><path d="M17 29.500h13M23.500 23v13" stroke="#86825a" stroke-width="3.400" /><text x="38" y="51" font-size="12" fill="#8b8f92">20</text><circle class="dot" cx="29" cy="65" r="3" /></svg>
      <!-- CLion -->
      <svg class="ic" viewBox="0 0 60 72"><path d="M9 15L25 4l7 7 15-5 8 13-8 12 9 6-8 19-15-5-11 4L3 40z" fill="url(#clion)" /><path d="M24 4l12 11H25z" fill="#ef3d9c" /><path d="M33 10l14-4 8 12-9 11z" fill="#5cdc90" /><rect x="14.500" y="14.500" width="31" height="31" fill="#000" /><text x="17" y="31.500" font-size="15" font-weight="700" fill="#fff" textLength="25" lengthAdjust="spacingAndGlyphs">CL</text><rect x="18" y="39" width="12" height="2.200" fill="#fff" /></svg>
      <!-- PyCharm -->
      <svg class="ic" viewBox="0 0 60 72"><path d="M5 13L26 4l12 9 13 4 5 9-8 22-26 7-18-9z" fill="#56d488" /><path d="M35 10l9-6 2 13 9 6-6 12z" fill="#c9ec60" /><path d="M46 16l10 10-6 12z" fill="#30a9e8" /><path d="M46 22l11 26-10 7-27-2 12-12z" fill="#f3f25b" /><rect x="14.500" y="14.500" width="31" height="31" fill="#000" /><text x="17" y="31.500" font-size="15" font-weight="700" fill="#fff" textLength="26" lengthAdjust="spacingAndGlyphs">PC</text><rect x="18" y="39" width="12" height="2.200" fill="#fff" /></svg>
      <!-- R -->
      <svg class="ic" viewBox="0 0 60 72"><path d="M30 8.500c15 0 27.500 8 27.500 19S45 46 30 46 2 38.500 2 27.500 15 8.500 30 8.500zM34 16c-12 0-21 5-21 12s9 11 21 11 19-4 19-11-8-12-19-12z" fill="url(#silver)" fill-rule="evenodd" /><text x="23" y="52" font-size="44" font-weight="700" fill="#2f6bbd" textLength="33" lengthAdjust="spacingAndGlyphs">R</text></svg>
      <!-- Arduino -->
      <svg class="ic" viewBox="0 0 60 72"><circle cx="30" cy="30" r="25" fill="#3f9b9f" /><path d="M30 30c-5-8-7-8.500-10-8.500a8.500 8.500 0 0 0 0 17c3 0 5-.5 10-8.500s7-8.500 10-8.500a8.500 8.500 0 0 1 0 17c-3 0-5-.5-10-8.500z" fill="none" stroke="#fff" stroke-width="3.600" /><path d="M17 30h6M37 30h6M40 27v6" stroke="#fff" stroke-width="2" /></svg>
      <!-- Text editor -->
      <svg class="ic" viewBox="0 0 60 72"><path d="M4 12L37 4l4 44-31 7z" fill="#5d9cec" /><path d="M10 17l36-5 4 38-34 3z" fill="#dfdfdf" /><path d="M14 15l34-4 3 36-35 4z" fill="#fdfdfd" /><path d="M21 23l15-2M21 28l13-1M22 33l12-1" stroke="#6fc3ea" stroke-width="1.500" /><path d="M25 39c4-6 4 5 9-1" fill="none" stroke="#6fc3ea" stroke-width="1.400" /><path d="M47 5c3-2 6-1 5 3l-7 20-7 11c-2-1-2-2-1-4l2-12z" fill="#38393b" /></svg>
      <!-- TeamViewer -->
      <svg class="ic" viewBox="0 0 60 72"><rect x="8" y="8" width="44.500" height="45" rx="2.500" fill="url(#tv)" /><circle cx="30" cy="30.500" r="18.300" fill="#fff" /><path d="M14 30.500l10-6v3.500h12v-3.500l10 6-10 6V33H24v3.500z" fill="#2b79d3" /></svg>
      <i class="divider"></i>
      <!-- Downloads -->
      <svg class="ic" viewBox="0 0 60 72"><path d="M4 14c0-3 1-4 3-4h10c2 0 3 4 5 4h31c2 0 3 1 3 3v31c0 2-1 3-3 3H7c-2 0-3-1-3-3z" fill="url(#folder)" /><path d="M4 19h52" stroke="#9ad3ee" /><circle cx="30" cy="31" r="12" fill="#4785ae" /><path d="M27 24h6v8h5l-8 8-8-8h5z" fill="#72b3da" /></svg>
      <!-- Trash -->
      <svg class="ic" viewBox="0 0 60 72"><path d="M10 9h40l-5 41c-1 5-29 5-30 0z" fill="url(#trash)" /><ellipse cx="30" cy="10" rx="20" ry="3.600" fill="#333538" stroke="#9a9c9f" stroke-width="1.300" /></svg>
    </div>
  </div>
</template>

<style>
html, body { background: #000; overflow: hidden; }
</style>

<style scoped>
.screen { width: 3840px; height: 2400px; background: #000; display: flex; flex-direction: column; overflow: hidden; font-family: Inter, "Noto Sans CJK KR", sans-serif; }
.screen svg { display: block; flex: none; }
.defs { position: absolute; }
.menubar { height: 44px; margin-bottom: 2px; background: #1a1a1a; display: flex; color: #fff; font-size: 27px; line-height: 44px; white-space: pre; flex: none; }
.menubar span { display: inline-block; }
.apple { margin-left: 42px; }
.app-name { margin-left: 40px; width: 266px; font-weight: 700; }
.menus { display: flex; margin-left: 38px; gap: 35.500px; }
.menu:first-child { margin-right: 2px; }
.status { display: flex; margin-left: auto; padding-right: 46px; }

.windows { height: 2276px; flex: none; display: flex; }
.window { position: relative; width: 1920px; height: 2276px; display: flex; flex-direction: column; border-radius: 11px; overflow: hidden; background: #fff; }
.titlebar { height: 42px; flex: none; display: grid; grid-template-columns: 1fr auto 1fr; border-bottom: 2px solid #d3d3d3; background: #f6f6f6; color: #b3b3b3; font-size: 26px; line-height: 45px; white-space: pre; }
.titlebar .title span { display: inline-block; }
.title { display: block; height: 42px; padding-right: 3px; }
.diagram .titlebar { background: linear-gradient(#ebebeb, #d2d2d2); border-color: #aaa; color: #4a4a4a; }
.lights { display: flex; gap: 16px; padding: 10px 0 0 16px; }
.lights i { width: 24px; height: 24px; box-sizing: border-box; border-radius: 50%; background: #dedede; border: 1px solid #cdcdcd; }
.lights .close { display: grid; place-items: center; }
.lights .close::after { content: ""; width: 8px; height: 8px; border-radius: 50%; background: #6c6c6c; }
.diagram .lights .close { background: #ee6a5f; border-color: #d5524a; }
.diagram .lights .close::after { background: #460804; }
.diagram .lights .mini { background: #f5bf4f; border-color: #d6a243; }
.diagram .lights .zoom { background: #62c655; border-color: #52a842; }

.toolbar { height: 68px; flex: none; display: flex; background: #ececec; border-bottom: 2px solid #696969; padding-left: 108px; }
.help { margin-left: auto; margin-right: 13px; }
.vi-well { width: 66px; height: 66px; margin-top: 1px; flex: none; background: #c4c4c4; border-left: 2px solid #757575; padding: 1px 0 0 2px; box-sizing: content-box; }

.body { position: relative; flex: 1; display: flex; min-height: 0; }
.panel .body { background: linear-gradient(#e2e2e2 0 96.800%, #dadada 100%); }
.canvas text { fill: #000; }
.canvas .and { font-family: "DejaVu Sans", sans-serif; font-weight: 700; font-size: 22px; fill: #4c4835; stroke: #4c4835; stroke-width: .8px; }
.canvas .tf { font-family: "DejaVu Sans", sans-serif; font-size: 13.500px; font-weight: 700; fill: #3a8222; }
.vtrack { width: 30px; box-sizing: border-box; background: #ebebeb; flex: none; }
.vthumb { display: block; width: 16px; height: 2083px; margin: 45px 0 0 7px; border-radius: 8px; background: #b5b5b5; }
.diagram .vtrack { background: #fafafa; border-left: 2px solid #e8e8e8; }
.diagram .vthumb { height: 1927px; margin-top: 205px; background: #c1c1c1; }
.mark { position: absolute; left: 1180px; top: 1940px; overflow: visible; filter: drop-shadow(2px 3px 1.500px rgba(0, 0, 0, .38)); }
.diagram .mark { left: 1183px; top: 1942px; filter: drop-shadow(2px 3px 1.500px rgba(0, 0, 0, .4)); }
.brand { font-family: "Open Sans", sans-serif; font-weight: 700; }
.product { font-family: "Liberation Sans", sans-serif; font-weight: 700; }

.strip { height: 32px; flex: none; display: flex; background: linear-gradient(90deg, #fafafa 148px, #fafafa 40%, #f0f0f0 70%, #ececec); }
.diagram .strip { height: 30px; background: #fafafa; }
.evaluation { width: 148px; height: 100%; box-sizing: border-box; border-top: 2px solid #b0b0b0; border-bottom: 1px solid #bbb; background: linear-gradient(#e0e0e0, #f6f6f6); padding-left: 13px; font-size: 26px; line-height: 29px; color: #000; white-space: pre; flex: none; }
.diagram .evaluation { padding-left: 11px; }
.evaluation span { display: inline-block; }
.htrack { flex: 1; border-top: 2px solid #e6e6e6; }
.hthumb { display: block; width: 1637px; height: 16px; border-radius: 8px; background: #c1c1c1; margin: 7px 0 0 4px; }
.grip { background: #fff; margin-top: 2px; }
.cast { position: absolute; right: 0; top: 0; width: 80px; height: 100%; background: linear-gradient(90deg, rgba(0, 0, 0, 0), rgba(0, 0, 0, .04) 45%, rgba(0, 0, 0, .17)); border-right: 1px solid #999; box-sizing: border-box; }

.dock { position: relative; width: 1840px; height: 79px; margin: -1px auto 0; box-sizing: border-box; border: 2px solid #3d3d3d; border-bottom: 0; border-radius: 11px 11px 0 0; background: #111; display: flex; padding: 5px 0 0 4px; flex: none; }
.ic { width: 60px; height: 72px; overflow: visible; }
.dot { fill: #9b9b9b; }
.mono { font-family: "Liberation Mono", monospace; font-weight: 700; }
.petal { mix-blend-mode: multiply; opacity: .9; }
.divider { width: 2px; height: 58px; margin: 4px 12px 0 14px; background: #4c4c4c; }
</style>
